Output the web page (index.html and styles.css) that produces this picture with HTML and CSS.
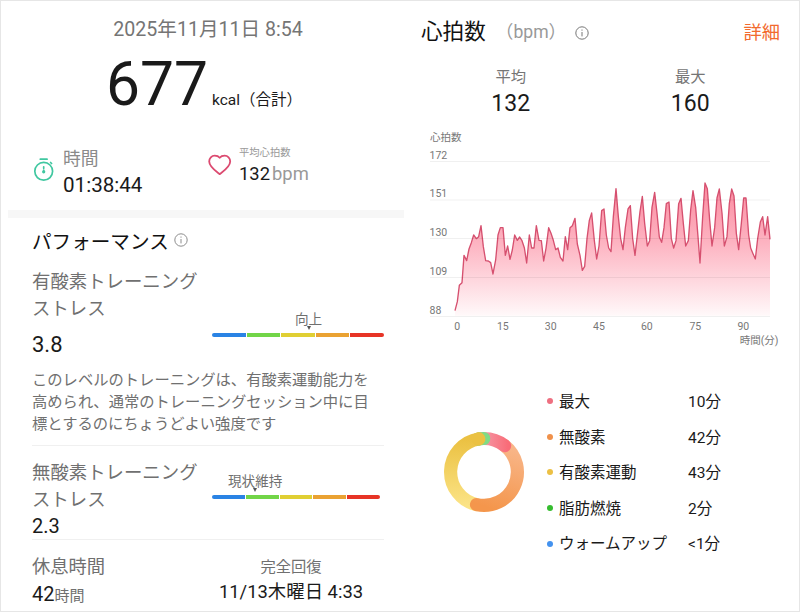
FILE: index.html
```
<!DOCTYPE html>
<html lang="ja">
<head>
    <meta charset="UTF-8">
    <title>ワークアウト詳細</title>
    <link rel="stylesheet" href="styles.css">
</head>
<body>

<div class="page">

    <!-- 左側: サマリー -->
    <div class="summary">
        <div class="date">2025年11月11日 8:54</div>
        <div class="calories">677 <span class="unit">kcal（合計）</span></div>

        <div class="stats">
            <svg class="icon-timer" width="22" height="24" viewBox="0 0 22 24" fill="none" stroke="#40c7a0" stroke-width="1.7" stroke-linecap="round">
                <circle cx="10.7" cy="13.3" r="8.9"/>
                <path d="M7.3 1.2h6.8M17.6 4.5l1 1M10.7 8.8v1.4M10.7 12v2.2"/>
                <circle cx="10.7" cy="13.8" r=".8"/>
            </svg>
            <div class="stat-time">
                <div class="label">時間</div>
                <div class="value">01:38:44</div>
            </div>
            <svg class="icon-heart" width="24" height="22" viewBox="0 0 24 22" fill="none" stroke="#dc4a70" stroke-width="1.8" stroke-linejoin="round">
                <path d="M11.7 20.2C8.3 17.6 1.2 13 1.2 7.6 1.2 4.2 3.7 1.7 6.7 1.7c2.1 0 3.9.7 5 2.1 1.1-1.4 2.9-2.1 5-2.1 3 0 5.5 2.5 5.5 5.9 0 5.4-7.1 10-10.5 12.6z"/>
            </svg>
            <div class="stat-heart">
                <div class="label">平均心拍数</div>
                <div class="value">132<span>bpm</span></div>
            </div>
        </div>

        <div class="band"></div>

        <h2 class="title">パフォーマンス
            <svg class="info" width="14" height="14" viewBox="0 0 14 14" fill="none" stroke="#8c8c8c">
                <circle cx="7" cy="7" r="6.2"/>
                <path d="M7 3.5v1.2M7 6v4.4"/>
            </svg>
        </h2>

        <div class="training aerobic">
            <div class="training-name">
                <div class="label">有酸素トレーニング<br>ストレス</div>
                <div class="score">3.8</div>
            </div>
            <div class="gauge">
                <div class="gauge-label">向上</div>
                <div class="gauge-bar"><i></i><i></i><i></i><i></i><i></i></div>
            </div>
        </div>
        <p class="description">このレベルのトレーニングは、有酸素運動能力を<br>高められ、通常のトレーニングセッション中に目<br>標とするのにちょうどよい強度です</p>

        <div class="training anaerobic">
            <div class="training-name">
                <div class="label">無酸素トレーニング<br>ストレス</div>
                <div class="score">2.3</div>
            </div>
            <div class="gauge">
                <div class="gauge-label">現状維持</div>
                <div class="gauge-bar"><i></i><i></i><i></i><i></i><i></i></div>
            </div>
        </div>

        <div class="rest">
            <div class="rest-hours">
                <div class="label">休息時間</div>
                <div class="value">42<span>時間</span></div>
            </div>
            <div class="rest-until">
                <div class="label">完全回復</div>
                <div class="value">11/13木曜日 4:33</div>
            </div>
        </div>
    </div>

    <!-- 右側: 心拍数 -->
    <div class="heart">
        <div class="heart-header">
            <h2>心拍数</h2>
            <span class="bpm">（bpm）</span>
            <svg class="info" width="14" height="14" viewBox="0 0 14 14" fill="none" stroke="#777">
                <circle cx="7" cy="7" r="6.2"/>
                <path d="M7 3.5v1.2M7 6v4.4"/>
            </svg>
            <a href="#" class="detail">詳細</a>
        </div>

        <div class="averages">
            <div>
                <div class="label">平均</div>
                <div class="value">132</div>
            </div>
            <div>
                <div class="label">最大</div>
                <div class="value">160</div>
            </div>
        </div>

        <svg class="chart" width="360" height="230" viewBox="0 0 360 230">
            <defs>
                <linearGradient id="area" gradientUnits="userSpaceOnUse" x1="0" y1="189" x2="0" y2="585">
                    <stop offset="0" stop-color="#fb8a9f"/>
                    <stop offset=".45" stop-color="#fdb3c1"/>
                    <stop offset="1" stop-color="#fff8f9"/>
                </linearGradient>
            </defs>
            <g transform="scale(.33333)">
                <path fill="url(#area)" d="M105 587L105 572 112 545 118 496 126 488 132 406 140 422 147 387 154 368 161 345 169 356 176 350 183 317 190 380 197 422 205 423 212 428 219 462 227 420 234 345 241 323 249 323 256 406 263 378 270 418 277 390 284 345 292 361 299 351 306 362 313 383 320 429 328 345 335 384 342 384 349 317 357 361 364 362 371 423 378 385 386 323 393 340 400 361 407 389 414 384 421 412 429 423 436 350 443 389 450 323 457 317 465 295 472 372 480 406 487 451 494 439 501 356 508 301 515 279 523 362 530 417 537 378 545 272 552 267 559 345 566 384 573 395 580 290 588 206 595 290 602 356 609 389 616 323 624 267 631 257 638 356 645 406 652 345 660 275 667 229 674 310 682 378 689 362 696 262 704 217 711 279 718 351 725 367 732 323 739 251 747 246 754 356 761 384 768 362 776 251 783 235 790 310 797 378 805 362 812 270 819 212 827 262 834 350 840 429 848 290 855 189 862 206 869 300 876 378 884 323 891 234 898 207 906 279 913 378 921 350 928 251 935 207 942 228 949 340 956 389 964 310 971 234 978 234 986 345 992 384 999 401 1006 417 1013 356 1021 306 1028 290 1035 345 1043 290 1050 358V587z"/>
                <path fill="none" stroke="#d6506f" stroke-width="4" stroke-linejoin="round" d="M105 572 112 545 118 496 126 488 132 406 140 422 147 387 154 368 161 345 169 356 176 350 183 317 190 380 197 422 205 423 212 428 219 462 227 420 234 345 241 323 249 323 256 406 263 378 270 418 277 390 284 345 292 361 299 351 306 362 313 383 320 429 328 345 335 384 342 384 349 317 357 361 364 362 371 423 378 385 386 323 393 340 400 361 407 389 414 384 421 412 429 423 436 350 443 389 450 323 457 317 465 295 472 372 480 406 487 451 494 439 501 356 508 301 515 279 523 362 530 417 537 378 545 272 552 267 559 345 566 384 573 395 580 290 588 206 595 290 602 356 609 389 616 323 624 267 631 257 638 356 645 406 652 345 660 275 667 229 674 310 682 378 689 362 696 262 704 217 711 279 718 351 725 367 732 323 739 251 747 246 754 356 761 384 768 362 776 251 783 235 790 310 797 378 805 362 812 270 819 212 827 262 834 350 840 429 848 290 855 189 862 206 869 300 876 378 884 323 891 234 898 207 906 279 913 378 921 350 928 251 935 207 942 228 949 340 956 389 964 310 971 234 978 234 986 345 992 384 999 401 1006 417 1013 356 1021 306 1028 290 1035 345 1043 290 1050 358"/>
            </g>
            <path class="grid" d="M10 41.5h340M10 80h340M10 118.5h340M10 157.5h340M10 196.5h340"/>
            <text x="10" y="20.7">心拍数</text>
            <text x="9.5" y="38.8">172</text>
            <text x="9.5" y="77.4">151</text>
            <text x="9.5" y="116.1">130</text>
            <text x="9.5" y="154.8">109</text>
            <text x="9.5" y="193.7">88</text>
            <g text-anchor="middle">
                <text x="37.3" y="210.3">0</text>
                <text x="82.8" y="210.3">15</text>
                <text x="130.7" y="210.3">30</text>
                <text x="179" y="210.3">45</text>
                <text x="226.8" y="210.3">60</text>
                <text x="275.3" y="210.3">75</text>
                <text x="323.3" y="210.3">90</text>
            </g>
            <text x="358.5" y="223.8" text-anchor="end">時間(分)</text>
        </svg>

        <div class="zones">
            <svg class="donut" width="82" height="82" viewBox="-41 -41 82 82" fill="none" stroke-width="13.2" stroke-linecap="round">
                <defs>
                    <linearGradient id="max" gradientUnits="userSpaceOnUse" x1="2" y1="0" x2="24" y2="0">
                        <stop offset="0" stop-color="#f592a0"/>
                        <stop offset="1" stop-color="#f96c78"/>
                    </linearGradient>
                    <linearGradient id="anaerobic" gradientUnits="userSpaceOnUse" x1="20" y1="-26" x2="0" y2="34">
                        <stop offset="0" stop-color="#f8b587"/>
                        <stop offset="1" stop-color="#f4964c"/>
                    </linearGradient>
                    <linearGradient id="aerobic" gradientUnits="userSpaceOnUse" x1="0" y1="33" x2="0" y2="-33">
                        <stop offset="0" stop-color="#fbe385"/>
                        <stop offset="1" stop-color="#ebc142"/>
                    </linearGradient>
                </defs>
                <path stroke="url(#aerobic)" d="M-7.5 32.6A33.5 33.5 0 0 1 -5.2 -33.1"/>
                <path stroke="url(#anaerobic)" d="M20.6 -26.4A33.5 33.5 0 0 1 -7.5 32.6"/>
                <path stroke="url(#max)" d="M0 -33.5A33.5 33.5 0 0 1 20.6 -26.4"/>
                <path stroke="#7fdb86" d="M-5.2 -33.1A33.5 33.5 0 0 1 -.3 -33.5"/>
                <path stroke="#ebc142" d="M-6 -33L-5.2 -33.1"/>
            </svg>
            <ul class="zone-list">
                <li class="zone-max"><span>最大</span><b>10分</b></li>
                <li class="zone-anaerobic"><span>無酸素</span><b>42分</b></li>
                <li class="zone-aerobic"><span>有酸素運動</span><b>43分</b></li>
                <li class="zone-fat"><span>脂肪燃焼</span><b>2分</b></li>
                <li class="zone-warmup"><span>ウォームアップ</span><b>&lt;1分</b></li>
            </ul>
        </div>
    </div>

</div>

</body>
</html>
```
FILE: styles.css
```
* {
    box-sizing: border-box;
}

body {
    margin: 0;
    background-color: #fff;
    color: #1a1a1a;
    font-family: Roboto, "Noto Sans CJK JP", sans-serif;
}

h2, p, ul {
    margin: 0;
    padding: 0;
    font-weight: normal;
}

svg {
    display: block;
    flex: none;
}

.page {
    display: flex;
    width: 800px;
    height: 612px;
    border: 1px solid #e6e6e6;
    overflow: hidden;
}

/* 左側 */
.summary {
    width: 404px;
    padding: 15px 20px 0 31px;
}

.date {
    line-height: 28px;
    font-size: 19.6px;
    text-align: center;
    color: #757575;
}

.calories {
    margin-top: 9px;
    padding-left: 74px;
    line-height: 64px;
    font-size: 60.5px;
    white-space: nowrap;
    word-spacing: -11px;
}

.calories .unit {
    font-size: 15.5px;
    line-height: 1;
    word-spacing: 0;
}

/* 時間・平均心拍数 */
.stats {
    display: flex;
    height: 53px;
    margin-top: 28px;
}

.icon-timer {
    margin: 13px 8px 0 1px;
}

.stat-time {
    width: 145px;
    padding-top: 1px;
}

.stat-time .label {
    line-height: 26px;
    font-size: 17.8px;
    color: #8a8a8a;
}

.stat-time .value {
    line-height: 27px;
    font-size: 20.6px;
}

.icon-heart {
    margin: 9px 7px 0 0;
}

.stat-heart {
    padding-top: 1px;
}

.stat-heart .label {
    line-height: 14px;
    font-size: 10.3px;
    color: #999;
}

.stat-heart .value {
    line-height: 27px;
    font-size: 18.4px;
}

.stat-heart .value span {
    margin-left: 2px;
    color: #999;
}

.band {
    height: 8px;
    margin: 12px -20px 0 -24px;
    background-color: #f7f7f7;
}

.title {
    display: flex;
    margin-top: 11px;
    line-height: 28px;
    font-size: 19.6px;
    color: #111;
}

.title .info {
    margin: 4px 0 0 5px;
}

/* トレーニングストレス */
.training {
    display: flex;
    justify-content: space-between;
}

.training .label {
    line-height: 26.7px;
    font-size: 18.4px;
    color: #707070;
}

.aerobic {
    margin-top: 12px;
}

.aerobic .score {
    margin-top: 8px;
    line-height: 30px;
    font-size: 22px;
}

.gauge {
    width: 172px;
}

.gauge-label {
    position: relative;
    width: fit-content;
    line-height: 18px;
    font-size: 13.6px;
    color: #707070;
}

.gauge-label::after {
    content: "";
    position: absolute;
    left: 50%;
    bottom: -2px;
    margin-left: -2px;
    border: 2px solid transparent;
    border-top: 4px solid #555;
    border-bottom: 0;
}

.gauge-bar {
    display: flex;
    gap: 1px;
    height: 4px;
    margin-top: 5px;
}

.gauge-bar i {
    flex: 1;
    background-color: #2a83e4;
}

.gauge-bar i:nth-child(2) { background-color: #72d548; }
.gauge-bar i:nth-child(3) { background-color: #e0cf33; }
.gauge-bar i:nth-child(4) { background-color: #eaa232; }
.gauge-bar i:nth-child(5) { background-color: #e73426; }

.gauge-bar i:first-child { border-radius: 2px 0 0 2px; }
.gauge-bar i:last-child { border-radius: 0 2px 2px 0; }

.aerobic .gauge {
    padding-top: 41px;
}

.aerobic .gauge-label {
    margin-left: 83px;
}

.description {
    margin-top: 8.5px;
    padding-bottom: 10.5px;
    border-bottom: 1px solid #f0f0f0;
    line-height: 22px;
    font-size: 15.3px;
    white-space: nowrap;
    color: #707070;
}

.anaerobic {
    padding-top: 13.5px;
    border-bottom: 1px solid #f0f0f0;
}

.anaerobic .score {
    line-height: 26px;
    font-size: 20px;
}

.anaerobic .gauge {
    padding: 12.5px 4px 0 0;
}

.anaerobic .gauge-label {
    margin-left: 16px;
}

/* 休息時間 */
.rest {
    display: flex;
    justify-content: space-between;
    margin-top: 13.5px;
}

.rest .label {
    line-height: 26px;
    color: #707070;
}

.rest-hours .label {
    font-size: 18.3px;
}

.rest-hours .value {
    line-height: 28px;
    font-size: 20px;
}

.rest-hours .value span {
    font-size: 15px;
    color: #707070;
}

.rest-until {
    width: 186px;
    text-align: center;
}

.rest-until .label {
    font-size: 15.3px;
}

.rest-until .value {
    line-height: 24px;
    font-size: 18.4px;
}

/* 右側 */
.heart {
    flex: 1;
    padding: 15px 19px 0 17px;
}

.heart-header {
    display: flex;
    line-height: 32px;
}

.heart-header h2 {
    font-size: 21.6px;
    color: #111;
}

.heart-header .bpm {
    margin-left: 10px;
    font-size: 17.6px;
    color: #999;
}

.heart-header .info {
    margin: 10px 0 0 9px;
}

.detail {
    margin-left: auto;
    font-size: 18.3px;
    line-height: 34px;
    text-decoration: none;
    color: #f26a2e;
}

.averages {
    display: flex;
    margin-top: 15px;
    text-align: center;
}

.averages > div {
    flex: 1;
}

.averages .label {
    line-height: 24px;
    font-size: 15.3px;
    color: #757575;
}

.averages .value {
    line-height: 30px;
    font-size: 23px;
}

.chart {
    margin: 1px 0 0 -1px;
}

.chart text {
    font-size: 10.5px;
    fill: #777;
}

.chart .grid {
    fill: none;
    stroke: #000;
    stroke-opacity: .06;
}

/* 心拍ゾーン */
.zones {
    display: flex;
    align-items: center;
    gap: 22px;
    margin: 35px 0 0 22px;
}

.donut {
    margin-top: -3px;
}

.zone-list {
    list-style: none;
    line-height: 35.6px;
    font-size: 15.5px;
}

.zone-list li {
    display: flex;
    align-items: center;
}

.zone-list li::before {
    content: "";
    width: 6px;
    height: 6px;
    margin: -3px 6px 0 0;
    border-radius: 50%;
    background-color: #ee6f80;
}

.zone-list span {
    width: 129px;
}

.zone-list b {
    font-weight: normal;
}

.zone-list .zone-anaerobic::before { background-color: #f0914a; }
.zone-list .zone-aerobic::before { background-color: #ecc044; }
.zone-list .zone-fat::before { background-color: #35bd2f; }
.zone-list .zone-warmup::before { background-color: #4392ef; }
```
